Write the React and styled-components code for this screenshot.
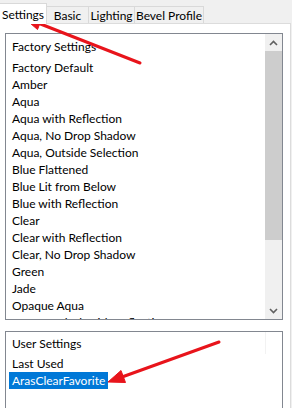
import React from "react";
import styled, { createGlobalStyle } from "styled-components";

const Global = createGlobalStyle`
  html, body { margin: 0; padding: 0; background: #f0f0f0; }
  #root { width: 292px; height: 408px; }
`;

const Screen = styled.div`
  position: relative;
  width: 292px;
  height: 408px;
  overflow: hidden;
  background: #f0f0f0;
  font-family: Lato, "Liberation Sans", Arial, sans-serif;
  font-size: 12px;
  color: #000;
`;

const Dialog = styled.div`
  margin-left: -8px;
  width: 299px;
  display: flex;
  flex-direction: column;
`;

const TabStrip = styled.div`
  display: flex;
  align-items: flex-end;
  height: 23px;
`;

const Tab = styled.div`
  box-sizing: border-box;
  width: ${(p) => p.$w}px;
  height: ${(p) => (p.$active ? 21 : 17)}px;
  margin-bottom: ${(p) => (p.$active ? -1 : 0)}px;
  padding-left: ${(p) => (p.$active ? 7 : 0)}px;
  display: flex;
  align-items: center;
  justify-content: center;
  background: ${(p) => (p.$active ? "#ffffff" : "#f0f0f0")};
  border-top: 1px solid #d9d9d9;
  border-right: 1px solid #d9d9d9;
  border-left: ${(p) => (p.$active ? "1px solid #d9d9d9" : "none")};
  position: ${(p) => (p.$active ? "relative" : "static")};
  z-index: ${(p) => (p.$active ? 1 : "auto")};
  white-space: nowrap;
`;

const TabPage = styled.div`
  box-sizing: border-box;
  background: #ffffff;
  border: 1px solid #dcdcdc;
  height: 400px;
  padding: 9px 7px 0 12px;
  display: flex;
  flex-direction: column;
`;

const ListBox = styled.div`
  box-sizing: border-box;
  width: 278px;
  height: ${(p) => p.$h}px;
  margin-top: ${(p) => p.$mt || 0}px;
  border: 1px solid #828790;
  background: #fff;
  display: flex;
  overflow: hidden;
  flex-shrink: 0;
`;

const Items = styled.div`
  flex: 1;
  padding: ${(p) => p.$pt}px 0 0 1px;
  display: flex;
  flex-direction: column;
  overflow: hidden;
`;

const Header = styled.div`
  height: 17px;
  line-height: 17px;
  padding-left: 5px;
  margin-bottom: ${(p) => p.$gap}px;
  white-space: nowrap;
`;

const Row = styled.div`
  height: 17px;
  flex-shrink: 0;
  padding-left: 2px;
  white-space: nowrap;
`;

const Label = styled.span`
  display: inline-block;
  height: 17px;
  line-height: 17px;
  padding: 0 3px;
  background: ${(p) => (p.$selected ? "#0078d7" : "transparent")};
  color: ${(p) => (p.$selected ? "#ffffff" : "#000000")};
`;

const ScrollBar = styled.div`
  width: 17px;
  display: flex;
  flex-direction: column;
  background: #f0f0f0;
`;

const ScrollButton = styled.div`
  height: 17px;
  display: flex;
  align-items: center;
  justify-content: center;
  flex-shrink: 0;
`;

const Thumb = styled.div`
  height: 189px;
  background: #cdcdcd;
  flex-shrink: 0;
`;

const Track = styled.div`
  flex: 1;
`;

const GhostBar = styled.div`
  width: 17px;
  align-self: flex-start;
  height: 22px;
  border-left: 1px solid #f2f2f2;
  box-sizing: border-box;
`;

const Overlay = styled.svg`
  position: absolute;
  left: 0;
  top: 0;
  pointer-events: none;
`;

const Chevron = ({ up }) => (
  <svg width="9" height="6" viewBox="0 0 9 6">
    <path
      d={up ? "M1 5 L4.5 1.5 L8 5" : "M1 1 L4.5 4.5 L8 1"}
      fill="none"
      stroke="#606060"
      strokeWidth="1.6"
    />
  </svg>
);

const factory = [
  "Factory Default",
  "Amber",
  "Aqua",
  "Aqua with Reflection",
  "Aqua, No Drop Shadow",
  "Aqua, Outside Selection",
  "Blue Flattened",
  "Blue Lit from Below",
  "Blue with Reflection",
  "Clear",
  "Clear with Reflection",
  "Clear, No Drop Shadow",
  "Green",
  "Jade",
  "Opaque Aqua",
  "Opaque Black with Reflection",
];

const tabs = [
  { name: "Settings", w: 55, active: true },
  { name: "Basic", w: 42 },
  { name: "Lighting", w: 46 },
  { name: "Bevel Profile", w: 69 },
];

export default function App() {
  return (
    <Screen>
      <Global />
      <Dialog>
        <TabStrip>
          {tabs.map((t) => (
            <Tab key={t.name} $w={t.w} $active={t.active}>
              {t.name}
            </Tab>
          ))}
        </TabStrip>
        <TabPage>
          <ListBox $h={287}>
            <Items $pt={4}>
              <Header $gap={4}>Factory Settings</Header>
              {factory.map((f) => (
                <Row key={f}>
                  <Label>{f}</Label>
                </Row>
              ))}
            </Items>
            <ScrollBar>
              <ScrollButton>
                <Chevron up />
              </ScrollButton>
              <Thumb />
              <Track />
              <ScrollButton>
                <Chevron />
              </ScrollButton>
            </ScrollBar>
          </ListBox>
          <ListBox $h={120} $mt={11}>
            <Items $pt={3}>
              <Header $gap={3}>User Settings</Header>
              <Row>
                <Label>Last Used</Label>
              </Row>
              <Row>
                <Label $selected>ArasClearFavorite</Label>
              </Row>
            </Items>
            <GhostBar />
          </ListBox>
        </TabPage>
      </Dialog>
      <Overlay width="292" height="408" viewBox="0 0 292 408">
        <g fill="#e8141b" stroke="#e8141b">
          <line x1="140" y1="63" x2="38" y2="23" strokeWidth="3" strokeLinecap="round" />
          <polygon points="23,17 42,18 37.5,29.5" strokeWidth="1" strokeLinejoin="round" />
          <line x1="219" y1="342" x2="122" y2="377" strokeWidth="3" strokeLinecap="round" />
          <polygon points="108,382 121,370.5 125.5,382.5" strokeWidth="1" strokeLinejoin="round" />
        </g>
      </Overlay>
    </Screen>
  );
}
